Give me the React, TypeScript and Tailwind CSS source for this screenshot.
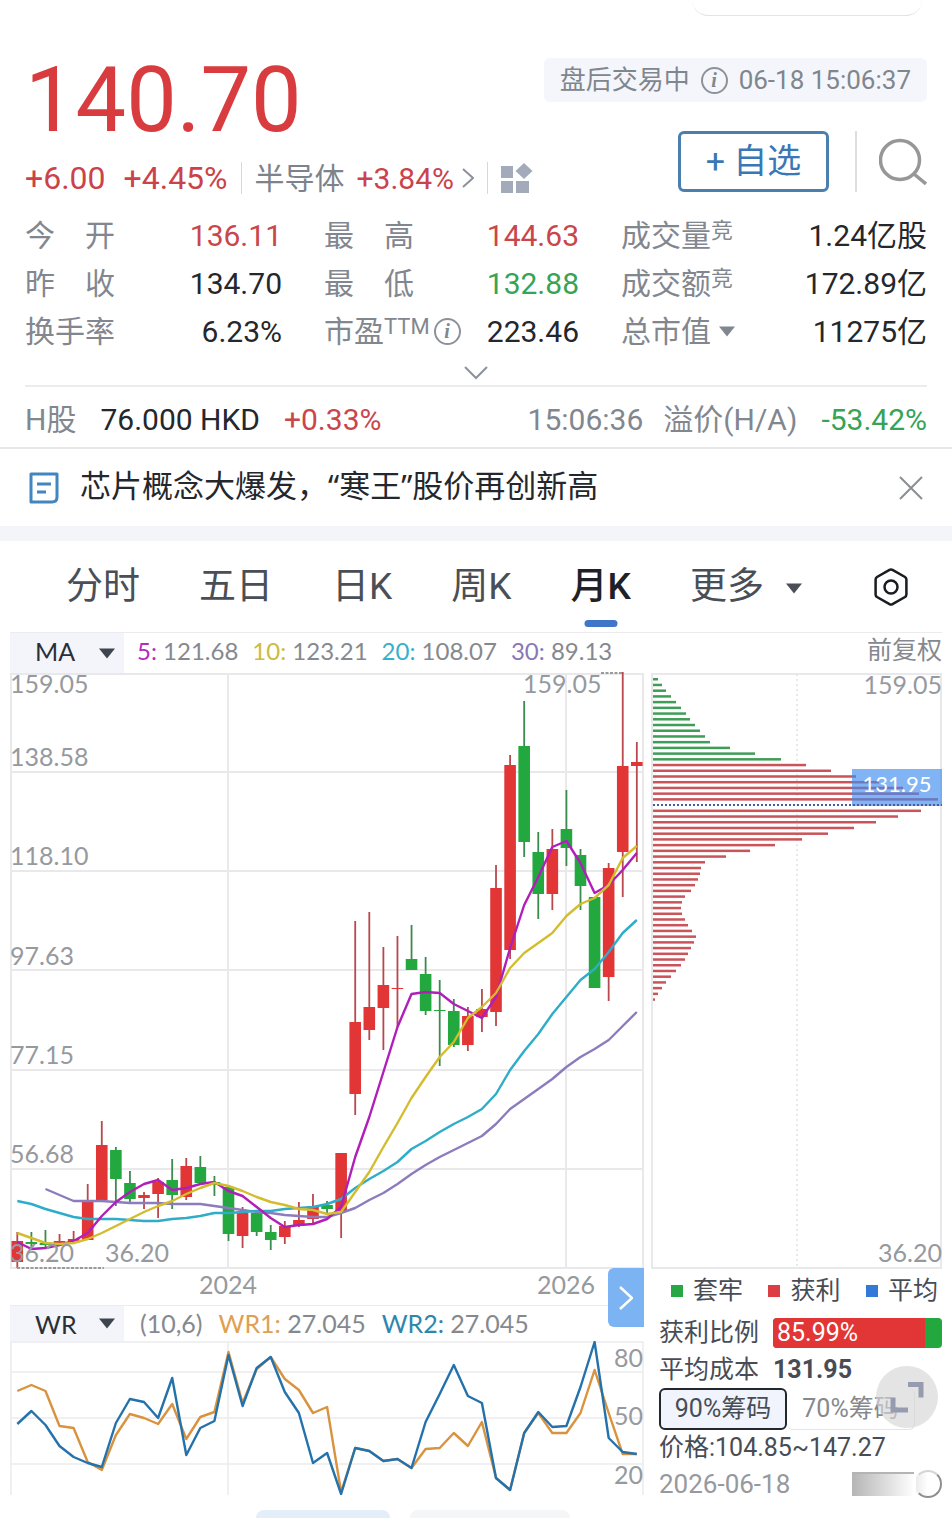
import { useState } from 'react';
import clsx from 'clsx';

const RED = '#e23535';
const GREEN = '#22a83f';

// chart canvas coordinates: one candle every 14.08 units, starting at 17.3
const xAt = (i: number) => 17.3 + i * 14.08;

// [direction, bodyTop, bodyBottom, wickTop, wickBottom]
type Candle = ['u' | 'd', number, number, number, number];

const CANDLES: Candle[] = [
  ['u', 1241, 1262, 1232, 1268],
  ['d', 1242, 1244, 1232, 1248],
  ['d', 1243, 1245, 1230, 1247],
  ['u', 1241, 1244, 1234, 1245],
  ['u', 1239, 1241, 1231, 1243],
  ['u', 1202, 1240, 1184, 1240],
  ['u', 1145, 1200, 1121, 1200],
  ['d', 1150, 1179, 1147, 1206],
  ['d', 1183, 1199, 1171, 1203],
  ['u', 1195, 1198, 1192, 1209],
  ['u', 1182, 1194, 1178, 1218],
  ['d', 1180, 1195, 1159, 1209],
  ['u', 1166, 1197, 1158, 1200],
  ['d', 1167, 1183, 1156, 1185],
  ['d', 1182, 1185, 1176, 1196],
  ['d', 1187, 1234, 1186, 1241],
  ['u', 1213, 1236, 1207, 1248],
  ['d', 1213, 1232, 1212, 1236],
  ['d', 1232, 1240, 1225, 1250],
  ['u', 1226, 1237, 1221, 1244],
  ['u', 1220, 1226, 1202, 1227],
  ['u', 1206, 1219, 1194, 1225],
  ['d', 1205, 1209, 1201, 1213],
  ['u', 1153, 1211, 1153, 1238],
  ['u', 1022, 1094, 921, 1115],
  ['u', 1007, 1030, 912, 1040],
  ['u', 985, 1008, 947, 1050],
  ['u', 988, 989, 936, 1027],
  ['d', 959, 970, 925, 970],
  ['d', 974, 1011, 957, 1015],
  ['d', 1010, 1011, 980, 1066],
  ['d', 1011, 1045, 999, 1047],
  ['u', 1016, 1045, 1007, 1051],
  ['u', 1009, 1017, 989, 1032],
  ['u', 888, 1012, 865, 1026],
  ['u', 765, 950, 755, 959],
  ['d', 746, 842, 701, 857],
  ['d', 852, 894, 832, 919],
  ['u', 849, 894, 829, 910],
  ['d', 829, 848, 790, 866],
  ['d', 855, 886, 849, 910],
  ['d', 897, 988, 897, 988],
  ['u', 868, 977, 863, 1001],
  ['u', 766, 852, 672, 897],
  ['u', 762, 766, 742, 862],
];

const MA5 = [
  1242, 1249, 1248, 1245, 1241, 1233, 1216, 1202, 1192, 1184, 1180, 1190, 1188, 1184, 1182, 1191, 1196, 1207, 1218,
  1227, 1225, 1224, 1219, 1207, 1157, 1117, 1072, 1027, 994, 992, 993, 1004, 1011, 1018, 997, 948, 905, 877, 847, 841,
  863, 893, 885, 870, 853,
];
const MA10 = [
  1233, 1238, 1243, 1244, 1243, 1239, 1233, 1226, 1219, 1212, 1206, 1201, 1194, 1188, 1183, 1186, 1191, 1197, 1202,
  1205, 1209, 1210, 1214, 1212, 1192, 1172, 1147, 1123, 1098, 1077, 1057, 1042, 1018, 1007, 993, 968, 953, 943, 933,
  916, 904, 898, 885, 858, 846,
];
const MA20 = [
  1201, 1204, 1209, 1213, 1217, 1219, 1219, 1219, 1220, 1221, 1221, 1219, 1218, 1216, 1213, 1213, 1212, 1211, 1211,
  1209, 1208, 1207, 1204, 1199, 1188, 1179, 1171, 1162, 1149, 1141, 1132, 1124, 1117, 1109, 1094, 1070, 1051, 1034,
  1014, 997, 980, 969, 952, 933, 920,
];
const MA30 = [
  1189, 1195, 1201, 1201, 1201, 1202, 1203, 1203, 1203, 1204, 1204, 1204, 1206, 1208, 1210, 1212, 1213, 1215, 1216,
  1217, 1217, 1213, 1208, 1200, 1193, 1184, 1174, 1165, 1157, 1150, 1143, 1136, 1124, 1109, 1099, 1089, 1079, 1067,
  1057, 1049, 1040, 1026, 1012,
];

const WR1 = [
  1391, 1385, 1391, 1426, 1428, 1462, 1470, 1435, 1414, 1418, 1424, 1404, 1439, 1417, 1412, 1352, 1403, 1369, 1357,
  1379, 1390, 1413, 1407, 1492, 1448, 1451, 1461, 1459, 1468, 1449, 1448, 1433, 1446, 1422, 1478, 1490, 1433, 1413,
  1433, 1433, 1413, 1370, 1413, 1454, 1454,
];
const WR2 = [
  1424, 1411, 1425, 1446, 1457, 1463, 1467, 1423, 1399, 1402, 1418, 1378, 1455, 1428, 1421, 1355, 1406, 1368, 1357,
  1392, 1413, 1463, 1453, 1494, 1448, 1451, 1461, 1459, 1468, 1422, 1394, 1365, 1396, 1403, 1478, 1490, 1433, 1412,
  1427, 1426, 1387, 1342, 1438, 1452, 1454,
];

const TRAPPED = [5, 9, 13, 18, 23, 28, 33, 37, 42, 47, 52, 57, 77, 102, 128];
const PROFIT = [
  153, 178, 203, 226, 250, 266, 285, 0, 268, 245, 223, 201, 175, 149, 122, 97, 73, 52, 48, 47, 45, 42, 38, 32, 29, 28,
  29, 32, 35, 39, 43, 41, 38, 35, 32, 28, 23, 18, 13, 9, 5, 2,
];

const linePoints = (ys: number[], start = 0) => ys.map((y, i) => `${xAt(i + start).toFixed(1)},${y}`).join(' ');

function InfoIcon() {
  return (
    <span
      aria-hidden="true"
      className="flex size-[27px] shrink-0 items-center justify-center rounded-full border-2 border-[#8d929a] font-['Liberation_Serif',serif] text-xl leading-none font-bold text-[#80868e] italic"
    >
      i
    </span>
  );
}

function Triangle({ className }: { className?: string }) {
  return (
    <svg viewBox="0 0 16 10" className={clsx('h-[11px] w-[16px] shrink-0', className)} aria-hidden="true">
      <path d="M0 0h16L8 10z" fill="currentColor" />
    </svg>
  );
}

function Header() {
  return (
    <header className="flex justify-between px-[25px] pt-10">
      <div>
        <div className="text-[90px] leading-[90px] text-[#d93c3e]">140.70</div>
        <div className="mt-3 flex h-10 items-center text-[30px] text-[#cb434a]">
          <span className="text-[32px]">+6.00</span>
          <span className="ml-[18px] text-[32px]">+4.45%</span>
          <span className="mx-[13px] h-8 w-px bg-[#d6d8dc]" />
          <a href="#sector" className="flex items-center">
            <span className="text-[#7d838c]">半导体</span>
            <span className="ml-3">+3.84%</span>
            <svg viewBox="0 0 12 20" className="ml-2 h-5 w-3" fill="none" stroke="#8d929a" strokeWidth="2">
              <path d="M1 1l10 9-10 9" />
            </svg>
          </a>
          <span className="mx-[13px] h-8 w-px bg-[#d6d8dc]" />
          <button aria-label="板块" className="block">
            <svg viewBox="0 0 32 30" className="h-[30px] w-8" fill="#a3abbb">
              <path d="M0 3h12v12H0zM0 18h12v12H0zM15 18h13v12H15zM23 0l8.500 8-8.500 8-8.500-8z" />
            </svg>
          </button>
        </div>
      </div>
      <div className="flex flex-col items-end pt-[2px]">
        <div className="flex h-11 items-center rounded-md bg-[#f4f6fb] px-4 text-[26px] text-[#80868e]">
          <span>盘后交易中</span>
          <span className="mx-[11px]">
            <InfoIcon />
          </span>
          <time>06-18 15:06:37</time>
        </div>
        <div className="mt-[29px] flex items-center">
          <button className="flex h-[61px] w-[151px] items-center justify-center rounded-md border-[3px] border-[#4a7fae] text-[34px] text-[#3a78b5]">
            + 自选
          </button>
          <span className="mr-[22px] ml-[26px] h-[61px] w-[2px] bg-[#dcdee2]" />
          <button aria-label="搜索">
            <svg viewBox="0 0 48 48" className="size-12" fill="none" stroke="#979797" strokeWidth="3.500">
              <circle cx="21" cy="22" r="19.500" />
              <path d="M35 36l12 10" />
            </svg>
          </button>
        </div>
      </div>
    </header>
  );
}

interface StatProps {
  label: React.ReactNode;
  value: string;
  tone?: 'up' | 'down';
}

function Stat({ label, value, tone }: StatProps) {
  return (
    <div className="flex items-center justify-between">
      <dt className="flex items-center text-[#82878f]">{label}</dt>
      <dd
        className={clsx(
          tone === 'up' && 'text-[#c9464b]',
          tone === 'down' && 'text-[#37a355]',
          !tone && 'text-[#24272c]',
        )}
      >
        {value}
      </dd>
    </div>
  );
}

function Stats() {
  return (
    <section className="px-[25px]">
      <dl className="mt-[13px] grid auto-rows-[48px] grid-cols-[257fr_255fr_306fr] gap-x-[42px] text-[30px]">
        <Stat label="今　开" value="136.11" tone="up" />
        <Stat label="最　高" value="144.63" tone="up" />
        <Stat label={<span>成交量<sup className="-top-2 text-[22px]">竞</sup></span>} value="1.24亿股" />
        <Stat label="昨　收" value="134.70" />
        <Stat label="最　低" value="132.88" tone="down" />
        <Stat label={<span>成交额<sup className="-top-2 text-[22px]">竞</sup></span>} value="172.89亿" />
        <Stat label="换手率" value="6.23%" />
        <Stat
          label={
            <>
              <span>市盈<sup className="-top-2 text-[22px]">TTM</sup></span>
              <span className="ml-1">
                <InfoIcon />
              </span>
            </>
          }
          value="223.46"
        />
        <Stat
          label={
            <>
              总市值
              <Triangle className="ml-2" />
            </>
          }
          value="11275亿"
        />
      </dl>
      <button aria-label="展开" className="mx-auto flex h-[30px] items-end justify-center pb-[5px]">
        <svg viewBox="0 0 24 14" className="h-[14px] w-6" fill="none" stroke="#8d929a" strokeWidth="2">
          <path d="M1 1l11 11L23 1" />
        </svg>
      </button>
      <div className="flex h-[62px] items-center border-t-2 border-[#ececee] pt-1 text-[30px] text-[#82878f]">
        <span>H股</span>
        <span className="ml-6 text-[#24272c]">76.000 HKD</span>
        <span className="ml-6 text-[#c9464b]">+0.33%</span>
        <time className="ml-auto">15:06:36</time>
        <span className="ml-5">溢价(H/A)</span>
        <span className="ml-6 text-[#37a355]">-53.42%</span>
      </div>
    </section>
  );
}

function NewsBar() {
  return (
    <div className="flex h-[79px] items-center border-t-2 border-[#e6e7e9] px-[29px]">
      <svg viewBox="0 0 30 32" className="h-8 w-[30px]" fill="none" stroke="#4186c0" strokeWidth="3">
        <path d="M2 2h26v23q0 5-5 5H2z" strokeLinejoin="round" />
        <path d="M8 12h14M8 20h9" />
      </svg>
      <a
        href="#news"
        className="ml-[21px] pb-1 font-['Noto_Sans','Noto_Sans_CJK_SC',sans-serif] text-[31px] text-[#24272c]"
      >
        芯片概念大爆发，“寒王”股价再创新高
      </a>
      <button aria-label="关闭" className="ml-auto">
        <svg viewBox="0 0 24 24" className="size-6" fill="none" stroke="#8b8e92" strokeWidth="2">
          <path d="M1 1l22 22M23 1L1 23" />
        </svg>
      </button>
    </div>
  );
}

const TABS = ['分时', '五日', '日K', '周K', '月K'];

function PeriodTabs() {
  const [active, setActive] = useState('月K');
  return (
    <div className="flex h-[91px] items-center pr-[44px] pl-[66px]">
      <nav className="flex h-full flex-1 justify-between text-[37px] text-[#4a4f57]">
        {TABS.map((tab) => (
          <button
            key={tab}
            onClick={() => setActive(tab)}
            className={clsx('relative h-full', tab === active && 'font-medium text-[#1e2228]')}
          >
            {tab}
            {tab === active && (
              <span className="absolute bottom-[5px] left-1/2 h-[7px] w-[33px] -translate-x-1/2 rounded-full bg-[#3f76c9]" />
            )}
          </button>
        ))}
        <button className="flex items-center gap-[22px]">
          更多
          <Triangle className="mt-1" />
        </button>
      </nav>
      <button aria-label="设置" className="ml-[72px]">
        <svg viewBox="0 0 34 38" className="h-[38px] w-[34px]" fill="none" stroke="#191c20" strokeWidth="2.500">
          <path d="M15.500 1.800q1.500-.8 3 0L31 9q1.400.9 1.400 2.500v15q0 1.600-1.400 2.500l-12.500 7.200q-1.500.8-3 0L3 29q-1.400-.9-1.400-2.500v-15Q1.600 9.900 3 9z" />
          <circle cx="17" cy="19" r="6.500" />
        </svg>
      </button>
    </div>
  );
}

function IndicatorSelect({ label, options }: { label: string; options: string[] }) {
  return (
    <div className="relative flex h-full w-[114px] items-center bg-[#f3f5fa] text-[#2b2f36]">
      <select
        aria-label={label}
        className="h-full w-full appearance-none bg-transparent pb-1 pl-[25px] font-['Lato',sans-serif] text-[25px] outline-none"
      >
        {options.map((o) => (
          <option key={o}>{o}</option>
        ))}
      </select>
      <Triangle className="pointer-events-none absolute right-[9px] text-[#3f454e]" />
    </div>
  );
}

const MA_LEGEND = [
  { name: '5:', value: '121.68', color: 'text-[#b52bc0]' },
  { name: '10:', value: '123.21', color: 'text-[#cdbb3a]' },
  { name: '20:', value: '108.07', color: 'text-[#36b0cc]' },
  { name: '30:', value: '89.13', color: 'text-[#8878b8]' },
];

function MaBar() {
  return (
    <div className="mx-[10px] flex h-[41px] items-center border-t border-[#ececee] font-['Lato',sans-serif] text-[#85898f]">
      <IndicatorSelect label="主图指标" options={['MA', 'EMA', 'BOLL']} />
      <div className="ml-[13px] flex gap-[14px] pb-1 text-2xl">
        {MA_LEGEND.map((m) => (
          <span key={m.name}>
            <span className={m.color}>{m.name}</span> {m.value}
          </span>
        ))}
      </div>
      <span className="ml-auto pb-1 font-['Roboto','Noto_Sans_CJK_SC',sans-serif] text-[25px]">前复权</span>
    </div>
  );
}

const AXIS = [
  { y: 693, text: '159.05' },
  { y: 766, text: '138.58' },
  { y: 865, text: '118.10' },
  { y: 965, text: '97.63' },
  { y: 1064, text: '77.15' },
  { y: 1163, text: '56.68' },
  { y: 1262, text: '36.20' },
];

function CandleChart() {
  return (
    <svg
      viewBox="10 673 634 632"
      className="block w-full overflow-visible font-['Lato',sans-serif]"
      role="img"
      aria-label="月K"
    >
      <g stroke="#e9e9eb" strokeWidth="2" fill="none">
        <path d="M11 674H643V1268H11z" />
        <path d="M11 772H643M11 871H643M11 970H643M11 1070H643M11 1169H643M228 674V1268M566 674V1268" />
      </g>
      {CANDLES.map(([dir, top, bottom, high, low], i) => (
        <g key={i} fill={dir === 'u' ? RED : GREEN} stroke={dir === 'u' ? '#b8484c' : '#3c8b4e'}>
          <line x1={xAt(i)} x2={xAt(i)} y1={high} y2={low} strokeWidth="1.800" />
          <rect x={xAt(i) - 5.8} y={top} width="11.600" height={bottom - top} stroke="none" />
        </g>
      ))}
      <g fill="none" strokeWidth="2.400" strokeLinejoin="round">
        <polyline points={linePoints(MA30, 2)} stroke="#8c7bbd" />
        <polyline points={linePoints(MA20)} stroke="#2fadc8" />
        <polyline points={linePoints(MA5)} stroke="#b01fb8" />
        <polyline points={linePoints(MA10)} stroke="#d3bd2e" />
      </g>
      <g fill="#96999e" fontSize="25">
        {AXIS.map((a) => (
          <text key={a.text} x="10" y={a.y}>
            {a.text}
          </text>
        ))}
        <text x="523" y="693">159.05</text>
        <text x="105" y="1262">36.20</text>
        <text x="228" y="1294" textAnchor="middle">2024</text>
        <text x="566" y="1294" textAnchor="middle">2026</text>
      </g>
      <path d="M601 673H624M17 1268H104" stroke="#9a9a9a" strokeWidth="2" strokeDasharray="3 1.500" />
    </svg>
  );
}

function WrChart() {
  return (
    <svg viewBox="10 1341 634 154" className="block w-full font-['Lato',sans-serif]" role="img" aria-label="WR">
      <path
        d="M11 1495V1342H643V1495M11 1372H643M11 1418H643M11 1464H643M228 1342V1495"
        stroke="#ececee"
        strokeWidth="1.500"
        fill="none"
      />
      <g fill="none" strokeWidth="2.400" strokeLinejoin="round">
        <polyline points={linePoints(WR1)} stroke="#d9933f" />
        <polyline points={linePoints(WR2)} stroke="#2372ab" />
      </g>
      <g fill="#96999e" fontSize="25" textAnchor="end">
        <text x="643" y="1367">80</text>
        <text x="643" y="1425">50</text>
        <text x="643" y="1484">20</text>
      </g>
    </svg>
  );
}

function ChipChart() {
  return (
    <svg
      viewBox="652 673 290 595"
      className="block w-full overflow-visible font-['Lato',sans-serif]"
      role="img"
      aria-label="筹码分布"
    >
      <path d="M652 674H941V1268H652z" stroke="#e9e9eb" strokeWidth="2" fill="none" />
      <path d="M797 674V1268" stroke="#e2e2e4" strokeWidth="1.500" strokeDasharray="2 3" />
      {TRAPPED.map((w, i) => (
        <rect key={i} x="653" y={678 + i * 5.72} width={w} height="2.500" fill="#3f9e56" />
      ))}
      {PROFIT.map((w, i) => (
        <rect key={i} x="653" y={678 + (i + TRAPPED.length) * 5.72} width={w} height="2.500" fill="#c9555a" />
      ))}
      <rect x="852" y="769" width="90" height="37" fill="#3d8cf0" fillOpacity="0.650" />
      <path d="M653 805H942" stroke="#4a5aa0" strokeWidth="2" strokeDasharray="2 2" />
      <text x="897" y="792" fontSize="22" fill="#fff" textAnchor="middle">131.95</text>
      <g fill="#96999e" fontSize="25" textAnchor="end">
        <text x="942" y="694">159.05</text>
        <text x="942" y="1262">36.20</text>
      </g>
    </svg>
  );
}

function ChipPanel() {
  return (
    <div className="relative pl-[7px] text-[25px] leading-[38px] text-[#484d55]">
      <ul className="flex h-[46px] items-center justify-between pr-1 pl-3">
        <li className="flex items-center gap-[10px]">
          <span className="size-3 bg-[#28a745]" />
          套牢
        </li>
        <li className="flex items-center gap-[10px]">
          <span className="size-3 bg-[#dc3f43]" />
          获利
        </li>
        <li className="flex items-center gap-[10px]">
          <span className="size-3 bg-[#3579d8]" />
          平均
        </li>
      </ul>
      <div className="flex h-[38px] items-center">
        <span>获利比例</span>
        <div className="ml-[14px] flex h-[30px] flex-1 items-center overflow-hidden rounded-sm bg-[#22a83f]">
          <div className="flex h-full items-center bg-[#e23535] pl-1 text-white" style={{ width: '90%' }}>
            85.99%
          </div>
        </div>
      </div>
      <div className="flex h-9 items-center">
        <span>平均成本</span>
        <strong className="ml-[14px]">131.95</strong>
      </div>
      <div className="flex h-[42px]">
        <button className="w-32 rounded-md border-2 border-[#23272e] bg-[#f1f4fc]">90%筹码</button>
        <button className="w-32 rounded-md border-r border-b border-[#e3e4e6] text-[#85898f]">70%筹码</button>
      </div>
      <div className="h-9 leading-9">价格:104.85~147.27</div>
      <div className="flex h-9 items-center justify-between text-[26px] text-[#96999e]">
        <time>2026-06-18</time>
        <div className="flex items-center">
          <span className="h-6 w-[62px] border-t-2 border-[#b4b4b4] bg-linear-to-r from-[#b5b5b5] to-white" />
          <span className="size-7 rounded-full border-2 border-t-[#d5d5d5] border-r-[#8f8f8f] border-b-[#8f8f8f] border-l-transparent bg-linear-to-r from-[#ececec] to-white to-50%" />
        </div>
      </div>
      <button
        aria-label="全屏"
        className="absolute top-[98px] right-1 flex size-[62px] items-center justify-center rounded-full bg-[#d5d5d7]/65"
      >
        <svg viewBox="0 0 34 34" className="size-[34px]" fill="none" stroke="#969bb0" strokeWidth="5">
          <path d="M18 4.500h13v13M3 18v12h15" />
        </svg>
      </button>
    </div>
  );
}

export default function App() {
  return (
    <main className="w-full overflow-hidden bg-white font-['Roboto','Noto_Sans_CJK_SC',sans-serif] leading-normal">
      <div className="mr-[30px] ml-auto h-4 w-[230px] rounded-b-3xl border-b border-[#e4e4e6]" />
      <Header />
      <Stats />
      <NewsBar />
      <div className="h-[15px] bg-[#f3f5f8]" />
      <PeriodTabs />
      <MaBar />
      <div className="flex gap-2 px-[10px]">
        <div className="min-w-0 flex-[634]">
          <div className="relative">
            <CandleChart />
            <button
              aria-label="下一页"
              className="absolute right-0 -bottom-[22px] z-10 flex h-[59px] w-9 items-center justify-center rounded-l-md bg-[#7cb3f3]"
            >
              <svg viewBox="0 0 14 24" className="h-6 w-[14px]" fill="none" stroke="#fff" strokeWidth="2.500">
                <path d="M1 1l12 11L1 23" />
              </svg>
            </button>
          </div>
          <div className="flex h-9 items-center gap-4 border-t border-[#ececee] font-['Lato',sans-serif] text-[25px] text-[#85898f]">
            <IndicatorSelect label="副图指标" options={['WR', 'MACD', 'KDJ']} />
            <span>(10,6)</span>
            <span>
              <span className="text-[#dfa050]">WR1:</span> 27.045
            </span>
            <span>
              <span className="text-[#2f86ad]">WR2:</span> 27.045
            </span>
          </div>
          <WrChart />
        </div>
        <div className="min-w-0 flex-[290]">
          <ChipChart />
          <ChipPanel />
        </div>
      </div>
      <div className="mt-2 ml-[256px] flex h-2 gap-5">
        <span className="w-[134px] rounded-t-lg bg-[#e4eefb]" />
        <span className="w-[160px] rounded-t-lg bg-[#f5f6f8]" />
      </div>
    </main>
  );
}
